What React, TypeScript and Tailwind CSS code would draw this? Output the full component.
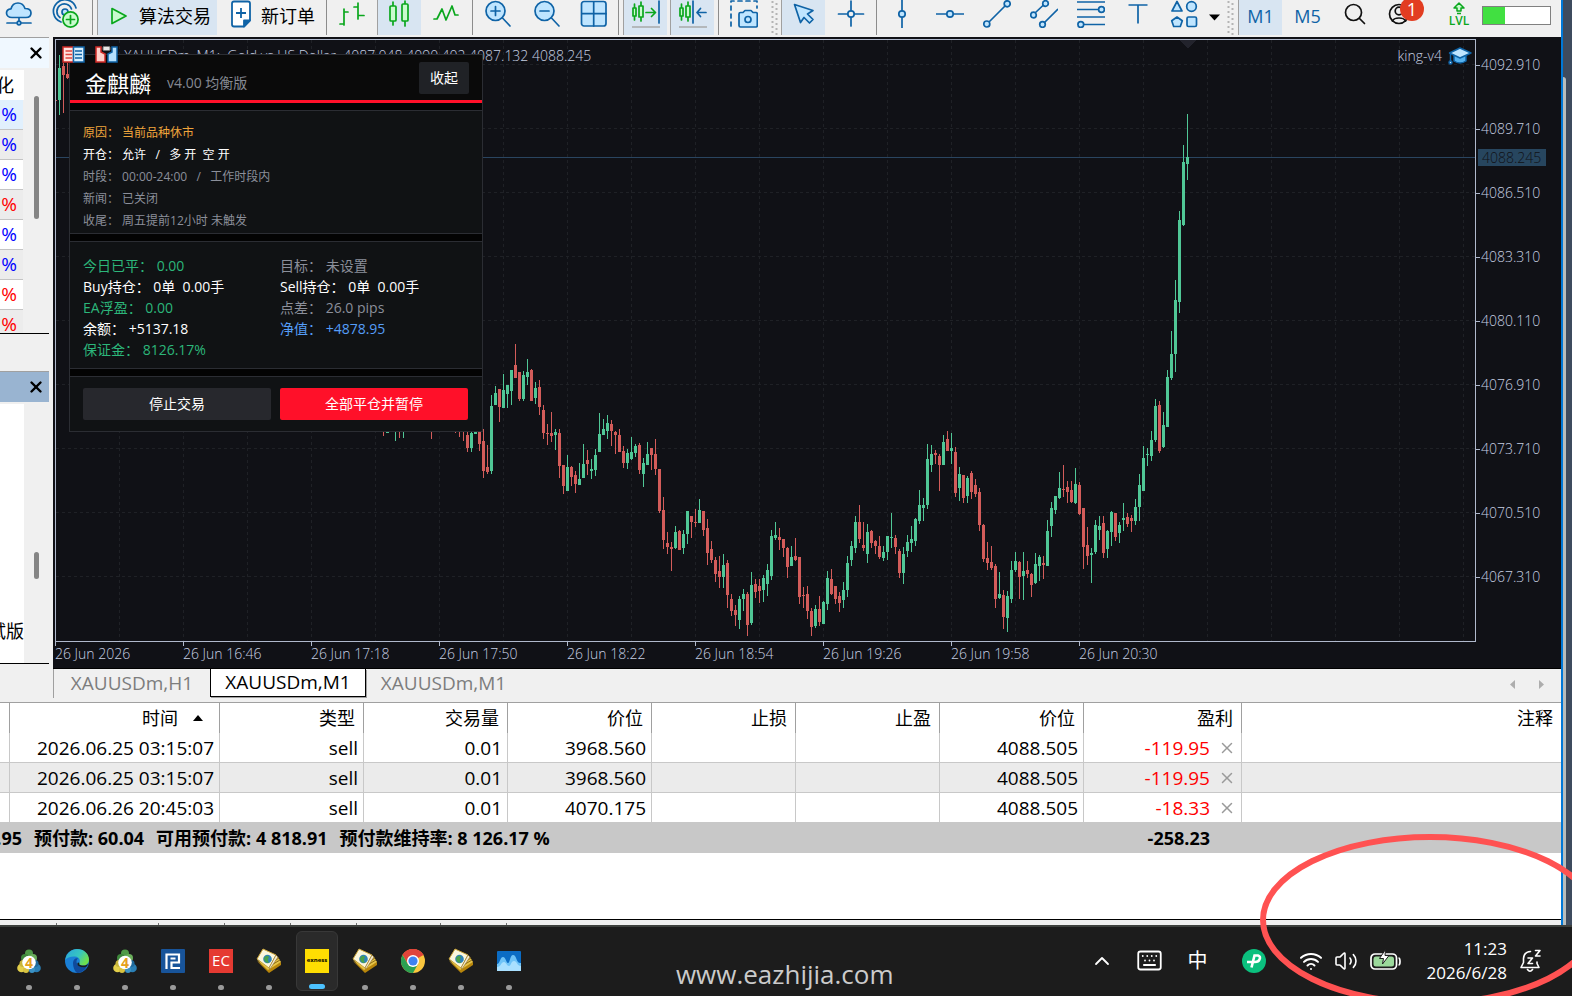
import React from 'react';
import { ChevronUp, Keyboard, Volume2, Wifi, X } from 'lucide-react';

type Direction = 'up' | 'down';

interface Candle {
  x: number;
  dir: Direction;
  high: number;
  top: number;
  bottom: number;
  low: number;
}

const UP = '#50c796';
const DOWN = '#d35c5a';
const BLUE = '#0f63a6';
const BLUE_FILL = '#bfe5ff';
const GREEN = '#0aa71d';
const GREEN_FILL = '#c9fbce';

// direction, high, body top, body bottom, low
const SERIES = `
r 432 435 448 452|g 432 433 448 452|g 432 432 434 434|r 432 432 444 451|r 429 441 471 478
r 445 467 472 474|g 395 406 471 474|g 386 393 405 405|r 389 389 407 422|g 374 390 408 408
g 385 385 394 408|g 370 370 391 405|r 344 365 378 378|r 372 372 399 401|g 371 375 399 401
g 359 372 377 385|r 369 370 401 401|g 382 388 398 404|r 380 387 407 415|r 405 410 433 439
r 424 433 434 445|r 412 433 436 442|g 429 432 435 450|r 429 433 466 478|r 465 465 486 494
g 455 467 491 491|r 466 467 477 486|r 471 475 484 493|g 463 479 485 485|g 444 464 478 478
r 450 460 464 475|g 459 469 471 479|g 449 455 470 476|g 413 434 452 452|g 419 429 435 435
g 415 423 431 439|r 420 424 431 446|r 431 432 435 454|r 429 435 452 452|r 446 451 463 468
g 449 453 463 469|g 437 452 459 460|g 444 446 453 457|r 443 445 470 474|g 458 463 474 487
g 442 454 465 465|r 448 448 455 470|r 439 454 469 475|r 469 469 511 513|r 497 510 540 549
r 532 543 547 554|r 542 547 549 571|g 526 532 548 549|r 530 531 550 550|g 530 534 548 554
g 511 511 534 544|r 516 516 522 538|r 509 522 523 527|g 499 510 523 523|r 511 511 530 536
r 519 528 553 565|r 541 549 560 563|r 557 560 574 582|r 556 571 577 588|g 554 565 577 588
r 560 563 595 608|r 594 599 611 616|r 605 610 615 626|g 596 599 620 629|g 589 594 599 611
r 592 594 625 636|g 572 585 623 625|r 579 584 592 598|r 579 586 591 603|g 575 578 590 602
g 564 570 584 596|g 530 536 576 580|g 522 535 538 540|r 528 537 540 550|r 539 539 548 557
r 547 548 567 578|g 546 557 566 566|r 538 556 560 561|r 557 557 597 604|r 587 595 596 608
r 586 594 611 619|r 608 611 627 636|g 605 609 626 628|r 596 609 622 626|g 601 602 624 624
g 571 578 604 610|r 569 579 594 595|r 586 586 599 604|r 592 596 603 612|g 582 590 600 608
g 556 563 590 597|g 541 546 560 566|g 516 522 548 553|r 505 522 539 543|r 522 545 548 551
g 524 532 554 563|r 530 531 543 548|r 540 541 546 554|r 536 546 557 559|g 546 552 558 561
g 536 536 552 560|g 513 537 538 548|r 535 538 547 554|r 549 551 573 578|g 547 554 573 584
g 535 542 551 557|g 526 539 543 552|g 518 519 541 546|g 490 505 521 524|g 498 505 508 521
g 444 459 505 509|g 445 454 465 472|r 450 453 455 464|r 454 456 465 491|g 435 442 465 465
r 431 439 451 451|g 433 448 451 464|r 447 452 493 497|g 467 474 488 501|r 475 475 498 503
g 476 478 496 503|r 471 473 492 499|r 479 485 494 497|r 488 492 525 531|r 524 525 559 562
r 542 558 563 570|r 546 562 568 570|r 564 566 599 608|g 572 594 598 599|r 590 595 617 629
g 591 596 618 632|g 561 570 599 603|g 552 561 570 572|r 561 562 577 599|g 552 571 576 600
r 561 570 574 578|r 573 574 585 597|g 553 564 583 584|g 555 557 566 581|r 556 563 565 579
g 520 531 566 566|g 502 508 526 537|g 496 496 510 514|g 472 488 498 499|r 465 489 490 497
r 481 487 492 503|r 481 490 502 503|g 468 484 503 504|r 482 485 514 515|r 508 508 547 569
r 527 545 556 565|g 548 553 555 583|g 520 525 552 554|g 516 526 530 540|r 516 523 553 558
g 530 531 549 558|g 511 512 532 546|r 513 513 537 541|g 522 525 533 543|g 503 518 520 531
r 513 517 524 527|r 515 518 521 532|g 499 507 521 525|g 474 485 507 521|g 446 458 491 491
g 448 454 455 466|g 431 440 456 461|g 399 406 440 442|r 401 405 451 453|g 412 425 447 448
g 370 377 427 427|g 331 354 378 380|g 280 300 354 372|g 211 220 302 313|g 145 162 225 226
g 114 157 164 180`;

const parseCandle = (row: string, x: number): Candle => {
  const [dir, high, top, bottom, low] = row.trim().split(' ');
  return { x, dir: dir === 'g' ? 'up' : 'down', high: +high, top: +top, bottom: +bottom, low: +low };
};

const CANDLES: Candle[] = [
  parseCandle('g 55 68 100 115', 59),
  parseCandle('r 63 66 75 113', 63),
  parseCandle('r 63 74 78 79', 67),
  parseCandle('r 425 425 428 436', 383),
  parseCandle('g 425 425 433 433', 387),
  parseCandle('g 425 425 428 441', 395),
  parseCandle('r 425 425 428 438', 399),
  parseCandle('g 425 425 428 438', 403),
  parseCandle('r 425 425 428 439', 431),
  parseCandle('r 425 425 428 433', 455),
  parseCandle('r 425 425 428 437', 459),
  parseCandle('r 425 425 428 441', 463),
  ...SERIES.trim().split(/[|\n]/).map((row, i) => parseCandle(row, 467 + i * 4)),
];

const PRICES = ['4092.910', '4089.710', '4086.510', '4083.310', '4080.110', '4076.910', '4073.710', '4070.510', '4067.310'];
const TIMES = ['2026', '16:46', '17:18', '17:50', '18:22', '18:54', '19:26', '19:58', '20:30'];

const POSITIONS = [
  { time: '2026.06.25 03:15:07', open: '3968.560', profit: '-119.95' },
  { time: '2026.06.25 03:15:07', open: '3968.560', profit: '-119.95' },
  { time: '2026.06.26 20:45:03', open: '4070.175', profit: '-18.33' },
];

const WATCH_ROWS = [
  'bg-[#e1f0fd] text-[#0000ff]',
  'bg-[#ececec] text-[#0000ff]',
  'bg-white text-[#0000ff]',
  'bg-[#ececec] text-[#ff0000]',
  'bg-white text-[#0000ff]',
  'bg-[#ececec] text-[#0000ff]',
  'bg-white text-[#ff0000]',
  'bg-[#ececec] text-[#ff0000]',
];

/* ---------- Toolbar ---------- */

const Icon: React.FC<{ children: React.ReactNode; color?: string; fill?: string }> = ({
  children,
  color = BLUE,
  fill = 'none',
}) => (
  <svg width="28" height="28" viewBox="0 0 28 28" stroke={color} fill={fill} strokeWidth="1.7" strokeLinecap="round" strokeLinejoin="round" className="shrink-0" aria-hidden="true">
    {children}
  </svg>
);

interface ToolProps {
  label: string;
  className: string;
  active?: boolean;
  children: React.ReactNode;
}

const Tool: React.FC<ToolProps> = ({ label, className, active, children }) => (
  <button
    type="button"
    aria-label={label}
    className={`flex h-[35px] shrink-0 items-center justify-center pb-[7px] ${active ? 'border-l border-[#a0a0a0] bg-[#d8e5f2]' : ''} ${className}`}
  >
    {children}
  </button>
);

const Separator = ({ className = '' }: { className?: string }) => (
  <div className={`h-[35px] w-px shrink-0 bg-[#8c8c8c] ${className}`} />
);

const Grip = () => (
  <svg width="7" height="36" className="shrink-0" aria-hidden="true">
    <path d="M1.5 1V36" stroke="#b4b4b4" strokeWidth="2" strokeDasharray="2 3" />
    <path d="M5.5 3V36" stroke="#b4b4b4" strokeWidth="2" strokeDasharray="2 3" />
  </svg>
);

const Toolbar = () => (
  <header className="flex h-[37px] items-start overflow-hidden bg-[#f0f0f0] text-lg text-black">
    <Tool label="云端" className="w-[38px]">
      <Icon fill={BLUE_FILL}>
        <path d="M7 17.500C3.500 17.500 1.500 15.500 1.500 13C1.500 10.500 3.500 9 6 8.800C7 5 9.500 3 13 3C17 3 19 5.500 20 8.500C24 8.500 26 10.500 26 13C26 15.700 24 17.500 21 17.500Z" />
        <path d="M14 18V21M2 23H11.500M16 23H26" />
        <circle cx="14" cy="23" r="1.800" />
      </Icon>
    </Tool>
    <Tool label="信号" className="w-[54px]">
      <Icon>
        <path d="M10 22A11.500 11.500 0 1 1 25 8M9 17.500A7.500 7.500 0 1 1 20.500 9" />
        <circle cx="14" cy="12" r="3" fill={BLUE_FILL} />
        <circle cx="19.500" cy="19.500" r="7.600" stroke={GREEN} fill={GREEN_FILL} />
        <path d="M19.500 15.500V23.500M15.500 19.500H23.500" stroke={GREEN} />
      </Icon>
    </Tool>
    <Separator />
    <button type="button" className="ml-1 flex h-[35px] w-[120px] shrink-0 items-center gap-3 border-l border-[#a0a0a0] bg-[#d8e5f2] pb-1 pl-[13px]">
      <svg width="16" height="18" viewBox="0 0 16 18" fill={GREEN_FILL} stroke={GREEN} strokeWidth="1.700" strokeLinejoin="round" aria-hidden="true">
        <path d="M1 1.500L15 9L1 16.500Z" />
      </svg>
      算法交易
    </button>
    <button type="button" className="flex h-[35px] w-[109px] shrink-0 items-center gap-2.5 pb-1 pl-3.5">
      <svg width="20" height="28" viewBox="0 0 20 28" fill="#fff" stroke={BLUE} strokeWidth="1.800" strokeLinejoin="round" className="-mt-1" aria-hidden="true">
        <path d="M3 1.500H17Q19 1.500 19 3.500V20L13 26.500H3Q1 26.500 1 24.500V3.500Q1 1.500 3 1.500Z" />
        <path d="M13 26.500V20.500H19Z" fill={BLUE} />
        <path d="M10 8V18M5 13H15" />
      </svg>
      新订单
    </button>
    <Separator />
    <Tool label="柱状图" className="w-[50px]">
      <Icon color={GREEN}><path d="M6 9V25M2 24H6M6 12H10M20 3V19M16 7H20M20 15.500H26" /></Icon>
    </Tool>
    <Tool label="蜡烛图" className="w-11" active>
      <Icon color={GREEN} fill={GREEN_FILL}>
        <path d="M7 2V25M19 1V26" />
        <rect x="4" y="6" width="6" height="15" rx="1" />
        <rect x="16" y="4" width="6" height="17" rx="1" />
      </Icon>
    </Tool>
    <Tool label="折线图" className="w-[51px]">
      <Icon color={GREEN}><path d="M1 19H4L9 9L13 20L19 6L22 15H25" /></Icon>
    </Tool>
    <Separator />
    <Tool label="放大" className="w-[50px]">
      <Icon><circle cx="11.500" cy="11" r="9.500" fill={BLUE_FILL} /><path d="M18.500 18L26 26M7 11H16M11.500 6.500V15.500" /></Icon>
    </Tool>
    <Tool label="缩小" className="w-12">
      <Icon><circle cx="11.500" cy="11" r="9.500" fill={BLUE_FILL} /><path d="M18.500 18L26 26M7 11H16" /></Icon>
    </Tool>
    <Tool label="平铺窗口" className="w-[46px]">
      <Icon><rect x="1.500" y="1.500" width="24.500" height="24.500" rx="2.500" fill={BLUE_FILL} /><path d="M13.700 2V26M2 13.700H26" /></Icon>
    </Tool>
    <Separator className="ml-px" />
    <Tool label="自动滚动" className="ml-1 w-11" active>
      <Icon color={GREEN}>
        <path d="M2.500 4V20M9 2V21" /><path d="M1 8H4V16H1ZM7 6H11V17H7Z" fill={GREEN_FILL} />
        <path d="M14 12.500H23M19.500 8.500L23.500 12.500L19.500 16.500" /><path d="M27 1V23" stroke={BLUE} />
        <path d="M0 27H28" stroke="#a8a8a8" />
      </Icon>
    </Tool>
    <Tool label="图表平移" className="ml-[3px] w-11" active>
      <Icon color={GREEN}>
        <path d="M2.500 4V20M9 2V21" /><path d="M1 8H4V16H1ZM7 6H11V17H7Z" fill={GREEN_FILL} />
        <path d="M14 1V23M18 12.500H27M21.500 8.500L18 12.500L21.500 16.500" stroke={BLUE} />
        <path d="M0 27H28" stroke="#a8a8a8" />
      </Icon>
    </Tool>
    <Separator className="ml-1" />
    <Tool label="截图" className="w-[50px]">
      <Icon>
        <path d="M1 26V1H27V8" strokeDasharray="4 4" />
        <path d="M9 14Q9 12.500 10.500 12.500H13L15 10.500H21L23 12.500H26Q27.300 12.500 27.300 14V25.500Q27.300 27 26 27H10.500Q9 27 9 25.500Z" fill={BLUE_FILL} />
        <circle cx="18" cy="19.500" r="3" />
      </Icon>
    </Tool>
    <div className="ml-0.5 mr-[3px]"><Grip /></div>
    <Tool label="光标" className="w-11" active>
      <Icon><path d="M4.500 4.500L23 10.500L17.500 14L23 19.500L19.500 23L14 17.500L10.500 22.500Z" fill={BLUE_FILL} /></Icon>
    </Tool>
    <Tool label="十字线" className="w-[51px]">
      <Icon><path d="M14 1V10.500M14 17.500V26M1.500 14H10.500M17.500 14H26.500" /><circle cx="14" cy="14" r="3.200" /></Icon>
    </Tool>
    <Separator />
    <Tool label="垂直线" className="w-[50px]">
      <Icon><path d="M14 0V10.500M14 17.500V28" /><circle cx="14" cy="14" r="3.200" fill={BLUE_FILL} /></Icon>
    </Tool>
    <Tool label="水平线" className="w-[45px]">
      <Icon><path d="M0.500 14H10.500M17.500 14H27.500" /><circle cx="14" cy="14" r="3.200" fill={BLUE_FILL} /></Icon>
    </Tool>
    <Tool label="趋势线" className="w-[49px]">
      <Icon><path d="M6 22L22 6" /><circle cx="3.800" cy="24" r="3" fill={BLUE_FILL} /><circle cx="24.200" cy="3.800" r="3" fill={BLUE_FILL} /></Icon>
    </Tool>
    <Tool label="等距通道" className="w-[46px]">
      <Icon>
        <path d="M5 13L14 4.500M14.500 22.500L27.500 9.500" />
        <circle cx="3.500" cy="15" r="2.800" fill={BLUE_FILL} /><circle cx="15.500" cy="3.500" r="2.800" fill={BLUE_FILL} /><circle cx="12.500" cy="24.500" r="2.800" fill={BLUE_FILL} />
      </Icon>
    </Tool>
    <Tool label="斐波那契" className="w-12">
      <Icon>
        <path d="M0.500 2H27.500M0.500 9.500H21.500M0.500 17H27.500M7 24.500H27.500" />
        <circle cx="24.500" cy="9.500" r="2.900" fill={BLUE_FILL} /><circle cx="3.800" cy="24.500" r="2.900" fill={BLUE_FILL} />
      </Icon>
    </Tool>
    <Tool label="文本" className="w-[46px]">
      <Icon><path d="M4.500 5H23.500M14 5V23.500" strokeLinecap="butt" /></Icon>
    </Tool>
    <Tool label="图形" className="w-[46px]">
      <Icon fill={BLUE_FILL}>
        <path d="M7 1.500L12 11H2Z" /><circle cx="21.500" cy="6.500" r="4.800" />
        <path d="M7 17L12.300 20.800L10.300 26.500H3.700L1.700 20.800Z" /><rect x="17" y="17" width="9.500" height="9.500" rx="1.500" />
      </Icon>
    </Tool>
    <button type="button" aria-label="更多图形" className="flex h-[35px] w-3.5 shrink-0 items-center justify-center">
      <svg width="11" height="7" aria-hidden="true"><path d="M0 0.500H11L5.500 6.500Z" /></svg>
    </button>
    <div className="ml-1.5 mr-1"><Grip /></div>
    <button type="button" className="h-[35px] w-11 shrink-0 border-l border-[#a0a0a0] bg-[#d8e5f2] pb-1 text-[#0f63a6]">M1</button>
    <button type="button" className="h-[35px] w-[51px] shrink-0 pb-1 text-[#0f63a6]">M5</button>
    <div className="ml-auto flex shrink-0 items-start pr-2.5">
      <Tool label="搜索" className="w-[38px]">
        <Icon color="#111"><circle cx="12.500" cy="12.500" r="8" /><path d="M18.500 18.500L23.500 23.500" /></Icon>
      </Tool>
      <div className="relative">
        <Tool label="账户" className="w-[54px]">
          <Icon color="#111">
            <circle cx="12" cy="14" r="9.500" /><circle cx="12" cy="11" r="3.800" /><path d="M5.500 21C7 17 17 17 18.500 21" />
          </Icon>
        </Tool>
        <span className="absolute -top-[3px] left-[26px] flex size-6 items-center justify-center rounded-full bg-[#e23d21] text-lg leading-6 text-white">1</span>
      </div>
      <button type="button" className="ml-2 flex h-[35px] w-[46px] flex-col items-center pt-0.5 text-xs leading-3 font-semibold text-[#0aa71d]">
        <svg width="12" height="13" viewBox="0 0 12 13" fill={GREEN_FILL} stroke={GREEN} strokeWidth="1.500" strokeLinejoin="round" aria-hidden="true">
          <path d="M6 1L11 6H8V9H4V6H1ZM4 11.500H8" />
        </svg>
        LVL
      </button>
      <div className="mt-1.5 h-[19px] w-[69px] border border-[#808080] bg-white">
        <div className="h-full w-1/3 bg-[#41e041]" />
      </div>
    </div>
  </header>
);

/* ---------- Left docks ---------- */

const DockHeader = ({ className }: { className: string }) => (
  <div className={`flex h-[31px] items-center justify-end border-t border-[#a0a0a0] pr-1 ${className}`}>
    <button type="button" aria-label="关闭"><X className="size-[18px]" strokeWidth={3.2} /></button>
  </div>
);

const LeftDocks = () => (
  <aside className="mr-1 flex w-[49px] shrink-0 flex-col text-lg text-black">
    <DockHeader className="bg-[#f0f8ff]" />
    <div className="flex h-[266px] overflow-hidden border-b border-black">
      <ul className="w-6 shrink-0 pt-0.5">
        <li className="flex h-[30px] items-center justify-end bg-white pr-2.5">化</li>
        {WATCH_ROWS.map((row, i) => (
          <li key={i} className={`mr-px flex h-[30px] items-center justify-end border-b border-[#c4c4c4] pr-1.5 text-[19px] ${row}`}>%</li>
        ))}
      </ul>
      <div className="mt-7 ml-2.5 h-[123px] w-[5px] rounded-full bg-[#858585]" />
    </div>
    <div className="h-[37px]" />
    <DockHeader className="bg-[#99b4d1]" />
    <div className="flex h-[262px] overflow-hidden border-b border-black pt-0.5">
      <div className="flex w-6 shrink-0 items-end justify-end overflow-hidden bg-white pb-[18px] whitespace-nowrap">试版</div>
      <div className="mt-37 ml-2.5 h-[27px] w-[5px] rounded-full bg-[#858585]" />
    </div>
  </aside>
);

/* ---------- Chart ---------- */

const Plot = () => (
  <svg className="block h-full w-full" role="img" aria-label="XAUUSDm M1">
    <g transform="translate(-56 -40)" shapeRendering="crispEdges">
      {Array.from({ length: 22 }, (_, i) => (
        <path key={`v${i}`} d={`M${119.5 + i * 64} 40V641`} stroke="#1f2126" strokeDasharray="3 3" />
      ))}
      {PRICES.map((price, i) => (
        <path key={price} d={`M56 ${64.5 + i * 64}H1475`} stroke="#1f2126" strokeDasharray="3 3" />
      ))}
      <path d="M56 157.500H3000" stroke="#2a4560" />
      <path d="M1179 40H1196L1187.500 48.500Z" fill="#22232c" />
      <rect x="56" y="100" width="1" height="1" fill={DOWN} />
      {CANDLES.map((c) => (
        <g key={c.x} fill={c.dir === 'up' ? UP : DOWN}>
          <rect x={c.x} y={c.high} width="1" height={c.low - c.high} />
          <rect x={c.x - 1} y={c.top} width="3" height={c.bottom - c.top} />
        </g>
      ))}
    </g>
  </svg>
);

const EaPanel = () => (
  <section className="absolute top-[17px] left-4 w-[414px] border border-[#2b2d33] bg-[#101214] text-sm text-white">
    <div className="flex h-[45px] items-center bg-[#0a0a0a] pr-[13px] pl-[15px]">
      <div className="flex items-center gap-4 pt-2.5">
        <h2 className="text-[22px] leading-8">金麒麟</h2>
        <span className="text-[#858993]">v4.00 均衡版</span>
      </div>
      <button type="button" className="ml-auto h-8 w-[50px] rounded-xs bg-[#202226]">收起</button>
    </div>
    <div className="h-[3px] bg-[#ff1029]" />
    <div className="h-2 border-b border-[#2b2d33] bg-[#030303]" />
    <div className="flex flex-col px-[13px] pt-[11px] text-xs leading-[22px] whitespace-pre text-[#8b8f9a]">
      <p className="text-[#efa53c]">原因： 当前品种休市</p>
      <p className="text-white">开仓： 允许   /   多 开  空 开</p>
      <p>时段： 00:00-24:00   /   工作时段内</p>
      <p>新闻： 已关闭</p>
      <p>收尾： 周五提前12小时 未触发</p>
    </div>
    <div className="mt-px h-[9px] border-y border-[#2b2d33] bg-[#030303]" />
    <div className="grid grid-cols-2 gap-x-[9px] pt-[13px] pr-3.5 pb-2 pl-[13px] leading-[21px] whitespace-pre">
      <div>
        <p className="text-[#2cb67a]">今日已平： 0.00</p>
        <p>Buy持仓： 0单  0.00手</p>
        <p className="text-[#2cb67a]">EA浮盈： 0.00</p>
        <p>余额： +5137.18</p>
        <p className="text-[#2cb67a]">保证金： 8126.17%</p>
      </div>
      <div className="text-[#8b8f9a]">
        <p>目标： 未设置</p>
        <p className="text-white">Sell持仓： 0单  0.00手</p>
        <p>点差： 26.0 pips</p>
        <p className="text-[#559df8]">净值： +4878.95</p>
      </div>
    </div>
    <div className="h-[9px] border-y border-[#2b2d33] bg-[#030303]" />
    <div className="grid grid-cols-2 gap-[9px] py-[11px] pr-3.5 pl-[13px]">
      <button type="button" className="h-8 rounded-xs bg-[#27282d]">停止交易</button>
      <button type="button" className="h-8 rounded-xs bg-[#ff1029]">全部平仓并暂停</button>
    </div>
  </section>
);

const ChartTitle = () => (
  <div className="absolute inset-x-0 top-1.5 flex h-5 items-center pr-[3px] pl-[7px]">
    <div className="ml-[61px] leading-5 whitespace-pre">XAUUSDm, M1:  Gold vs US Dollar  4087.048 4090.402 4087.132 4088.245</div>
    <div className="ml-auto flex items-center gap-1.5">
      king-v4
      <svg width="24" height="18" viewBox="0 0 24 18" fill={BLUE_FILL} stroke={BLUE} strokeWidth="1.500" strokeLinejoin="round" aria-hidden="true">
        <path d="M6 8V14Q12 18 18 14V8Z" fill="#56b2ef" />
        <path d="M12 1L23 6L12 11L1.500 6Z" />
        <path d="M2.500 7V14" />
        <circle cx="2.500" cy="15.500" r="1.500" />
      </svg>
    </div>
  </div>
);

const TradeToggles = () => (
  <div className="absolute top-[9px] left-[9px] flex gap-2.5">
    <svg width="23" height="17" viewBox="0 0 23 17" aria-hidden="true">
      <path d="M1 1H11.500V16H1Z" fill="#ffe3df" stroke="#cf2a27" strokeWidth="1.500" />
      <path d="M11.500 1H22V16H11.500Z" fill="#d7efff" stroke={BLUE} strokeWidth="1.500" />
      <path d="M3.500 5H10M3.500 8.500H10M3.500 12H10" stroke="#e0443f" strokeWidth="1.500" />
      <path d="M13 5H20M13 8.500H20M13 12H20" stroke={BLUE} strokeWidth="1.500" />
    </svg>
    <svg width="23" height="17" viewBox="0 0 23 17" aria-hidden="true">
      <path d="M1 1H6V6L10 8V16H1Z" fill="#ffd0ca" stroke="#cf2a27" strokeWidth="1.500" />
      <path d="M22 1H17V6L13 8V16H22Z" fill="#b5e1ff" stroke={BLUE} strokeWidth="1.500" />
      <rect x="8" y="0.500" width="7" height="4" rx="1" fill="#e6e6e6" stroke="#777" />
    </svg>
  </div>
);

const Chart = () => (
  <section className="relative h-[631px] bg-[#101116] pt-0.5 pl-0.5 text-sm text-[#c6cfe2]">
    <div className="flex h-[603px]">
      <div className="relative min-w-0 flex-1 overflow-hidden border border-[#b0b9cc] font-light">
        <Plot />
        <ChartTitle />
      </div>
      <div className="relative flex w-[85px] shrink-0 flex-col gap-11 pt-4 font-light">
        {PRICES.map((price) => (
          <div key={price} className="flex h-5 items-center gap-px">
            <span className="h-px w-1 bg-[#b0b9cc]" />
            {price}
          </div>
        ))}
        <div className="absolute top-[110px] left-0.5 h-[17px] w-[68px] bg-[#27465f] pl-1 leading-[17px] text-[#101116]">4088.245</div>
      </div>
    </div>
    <div className="flex font-light">
      {TIMES.map((time) => (
        <div key={time} className="w-32 shrink-0">
          <div className="h-1 w-px bg-[#b0b9cc]" />
          <div className="leading-4">26 Jun {time}</div>
        </div>
      ))}
    </div>
    <EaPanel />
    <TradeToggles />
  </section>
);

const ChartTabs = () => (
  <nav className="flex h-[34px] items-start border-t border-black text-[19px] leading-[27px] text-[#7d7d7d]">
    <button type="button" className="h-[29px] w-[157px] border-l border-[#a0a0a0]">XAUUSDm,H1</button>
    <button type="button" className="h-7 w-[156px] border-x border-b border-black bg-white text-black shadow-[1px_1px_0_#a0a0a0]">XAUUSDm,M1</button>
    <button type="button" className="h-[29px] w-[155px]">XAUUSDm,M1</button>
    <div className="ml-auto flex h-[30px] items-center gap-6 pr-[17px]">
      <button type="button" aria-label="上一个"><svg width="5" height="9" className="block" fill="#adadad"><path d="M5 0V9L0 4.500Z" /></svg></button>
      <button type="button" aria-label="下一个"><svg width="5" height="9" className="block" fill="#adadad"><path d="M0 0V9L5 4.500Z" /></svg></button>
    </div>
  </nav>
);

/* ---------- Terminal ---------- */

const HEAD = 'border-r border-[#a0a0a0] pr-2 text-right font-normal';
const CELL = 'border-r border-b border-[#c8c8c8] pr-[5px] text-right';

const Positions = () => (
  <div className="flex-1 border-t border-[#a0a0a0] bg-white">
    <table className="w-full table-fixed border-separate border-spacing-0 text-lg leading-7 whitespace-nowrap text-black">
      <colgroup>
        <col className="w-2.5" />
        <col className="w-[210px]" />
        <col className="w-36" /><col className="w-36" /><col className="w-36" />
        <col className="w-36" /><col className="w-36" /><col className="w-36" />
        <col className="w-[158px]" />
        <col />
      </colgroup>
      <thead>
        <tr className="h-[30px]">
          <th className={HEAD} />
          <th className={HEAD}>
            <span className="flex items-center justify-end gap-[15px] pr-2">
              时间
              <svg width="10" height="6" aria-hidden="true"><path d="M0 6L5 0L10 6Z" /></svg>
            </span>
          </th>
          {['类型', '交易量', '价位', '止损', '止盈', '价位', '盈利'].map((name, i) => (
            <th key={i} className={HEAD}>{name}</th>
          ))}
          <th className="pr-2 text-right font-normal">注释</th>
        </tr>
      </thead>
      <tbody className="text-[19px]">
        {POSITIONS.map((p, i) => (
          <tr key={i} className={i === 1 ? 'h-[30px] bg-[#ebebeb]' : 'h-[30px]'}>
            <td className={CELL} />
            <td className={CELL}>{p.time}</td>
            <td className={CELL}>sell</td>
            <td className={CELL}>0.01</td>
            <td className={CELL}>{p.open}</td>
            <td className={CELL} />
            <td className={CELL} />
            <td className={CELL}>4088.505</td>
            <td className={CELL}>
              <span className="flex items-center justify-end gap-2 text-[#ff0000]">
                {p.profit}
                <button type="button" aria-label="平仓" className="text-[#9a9a9a]"><X className="size-[18px]" /></button>
              </span>
            </td>
            <td className="border-b border-[#c8c8c8]" />
          </tr>
        ))}
      </tbody>
      <tfoot>
        <tr className="h-[30px] bg-[#c8c8c8] font-bold">
          <td colSpan={8}>
            <div className="flex gap-3">
              <span className="flex w-[22px] justify-end overflow-hidden">.95</span>
              <span>预付款: 60.04</span>
              <span>可用预付款: 4 818.91</span>
              <span>预付款维持率: 8 126.17 %</span>
            </div>
          </td>
          <td className="pr-8 text-right">-258.23</td>
          <td />
        </tr>
      </tfoot>
    </table>
  </div>
);

const StatusBar = () => (
  <div className="flex h-1.5 items-end border-t border-black bg-[#f0f0f0]">
    <div className="h-0.5 w-[57px] border-r border-[#707070]" />
    <div className="h-0.5 w-[102px] border-r border-[#707070]" />
    <div className="h-0.5 w-[66px] border-r border-[#707070]" />
    <div className="h-0.5 w-[66px] border-r border-[#707070]" />
    <div className="h-0.5 w-[66px] border-r border-[#707070]" />
    <div className="h-0.5 w-[84px] border-r border-[#707070]" />
    <div className="h-0.5 w-[66px] border-r border-[#707070]" />
  </div>
);

/* ---------- Taskbar ---------- */

const Mt4Logo = () => (
  <svg width="24" height="24" viewBox="0 0 24 24" aria-hidden="true">
    <circle cx="12" cy="4.500" r="4" fill="#4f9a48" />
    <circle cx="8" cy="9" r="4" fill="#3d873b" />
    <circle cx="16" cy="9" r="4" fill="#6aae5b" />
    <circle cx="4.500" cy="19" r="4.300" fill="#e3cf4a" />
    <circle cx="6" cy="14.500" r="3.500" fill="#c8b53a" />
    <circle cx="9" cy="21" r="3" fill="#d8c341" />
    <circle cx="19.500" cy="19" r="4.300" fill="#2a7fb5" />
    <circle cx="18" cy="14.500" r="3.500" fill="#1e6a9d" />
    <circle cx="15" cy="21" r="3" fill="#3b92c5" />
    <circle cx="12" cy="13.500" r="6.800" fill="#fff" />
    <text x="12" y="18.500" fontSize="14" fontWeight="700" textAnchor="middle" fill="#e5a11c" fontFamily="Open Sans, sans-serif">4</text>
  </svg>
);

const EdgeLogo = () => (
  <svg width="24" height="24" viewBox="0 0 24 24" aria-hidden="true">
    <defs>
      <linearGradient id="edge-top" x1="0" y1="0" x2="1" y2="0.500">
        <stop offset="0" stopColor="#2aa5dc" />
        <stop offset="0.600" stopColor="#37c6c0" />
        <stop offset="1" stopColor="#6ee04d" />
      </linearGradient>
    </defs>
    <circle cx="12" cy="12" r="12" fill="#1a7fd6" />
    <path d="M0.300 11C1.500 3.500 7 0 12 0C19 0 24 5 24 10.500C24 14.500 21 16.500 18 16.500C15 16.500 13.500 15.500 14.500 14C15.500 12 15 8 10 7.500C5.500 7.200 2 8.500 0.300 11Z" fill="url(#edge-top)" />
    <path d="M8 14C8 10.500 11 8.500 13 9.500C10.500 11 11 16.500 16 18C19 18.800 21.500 17.500 22.300 17C20 21.500 16 24 12 24C9.500 22 8 18 8 14Z" fill="#0f4a9c" />
    <path d="M14.500 14C13.500 15.500 15 16.500 18 16.500C20.500 16.500 22.500 15.600 23.200 14.200L22.300 17C20 19 15 18.600 13 16.500C12 15.500 12 12 14.500 14Z" fill="#1c1c1c" />
  </svg>
);

const PLogo = () => (
  <svg width="24" height="24" viewBox="0 0 24 24" fill="none" stroke="#fff" strokeWidth="2.200" aria-hidden="true">
    <rect width="24" height="24" rx="1" fill="#18549a" stroke="none" />
    <path d="M5.500 20V5.500H18V13.500H10.500V19H19M9.500 9.500H14.500" />
  </svg>
);

const BookLogo = () => (
  <svg width="26" height="26" viewBox="0 0 26 26" aria-hidden="true">
    <path d="M1 13L13 25L25 17V14L12 20Z" fill="#b8860b" />
    <path d="M1 12L12 22L25 14L22 9L12 17Z" fill="#e8c547" />
    <path d="M12 19L24 12M12 17L23 10" stroke="#8a6a1a" />
    <path d="M1 11L7 1L20 7L13 20Z" fill="#fbf6dc" stroke="#caa53a" />
    <path d="M13 20L20 7L22 9L14 21Z" fill="#f3ead0" stroke="#8a6a1a" strokeWidth="0.600" />
    <circle cx="11.500" cy="11" r="4.300" fill="#2f83b8" />
    <path d="M8 10Q11 6 13 9Q11 12 13 15Q8 15 8 10Z" fill="#4aa04a" />
  </svg>
);

const ChromeLogo = () => (
  <svg width="24" height="24" viewBox="0 0 24 24" aria-hidden="true">
    <circle cx="12" cy="12" r="12" fill="#fbc63e" />
    <path d="M12 12L1.600 6A12 12 0 0 1 22.400 6Z" fill="#e0443a" />
    <path d="M12 6H22.400A12 12 0 0 0 1.600 6L7 15Z" fill="#e0443a" />
    <path d="M1.600 6A12 12 0 0 0 12 24L17 15L12 18L6.800 15Z" fill="#2ba052" />
    <circle cx="12" cy="12" r="6" fill="#fff" />
    <circle cx="12" cy="12" r="4.600" fill="#3f82f0" />
  </svg>
);

const MonitorLogo = () => (
  <svg width="24" height="20" viewBox="0 0 24 20" aria-hidden="true">
    <rect width="24" height="20" rx="1" fill="#0b6cc4" />
    <path d="M0 13C3 13 3 6 6 6C9 6 9 12 11 12C13 12 13 4 16 4C20 4 19 13 24 12V20H0Z" fill="#6ec3f7" />
    <path d="M0 16C4 16 4 11 7 11C9 11 10 15 12 15C14 15 14 10 17 10C20 10 20 15 24 15V20H0Z" fill="#a9e0ff" />
  </svg>
);

const APPS: { name: string; icon: React.ReactNode; active?: boolean }[] = [
  { name: 'MetaTrader 4', icon: <Mt4Logo /> },
  { name: 'Edge', icon: <EdgeLogo /> },
  { name: 'MetaTrader 4 (2)', icon: <Mt4Logo /> },
  { name: 'P', icon: <PLogo /> },
  { name: 'EC', icon: <span className="flex size-6 items-center justify-center bg-[#e53a32] text-[15px] text-white">EC</span> },
  { name: 'MetaTrader 5', icon: <BookLogo /> },
  { name: 'Exness', icon: <span className="flex size-6 items-center justify-center bg-[#ffde02] text-[6px] font-bold text-black">exness</span>, active: true },
  { name: 'MetaTrader 5 (2)', icon: <BookLogo /> },
  { name: 'Chrome', icon: <ChromeLogo /> },
  { name: 'MetaTrader 5 (3)', icon: <BookLogo /> },
  { name: 'Monitor', icon: <MonitorLogo /> },
];

const Taskbar = () => (
  <footer className="relative flex h-[71px] items-center border-t-2 border-[#3d403d] bg-[#1c1c1c] pb-0.5 pl-[5px] text-white">
    {APPS.map((app) => (
      <button
        key={app.name}
        type="button"
        aria-label={app.name}
        className={`relative mx-[3px] flex h-[60px] w-[42px] items-center justify-center rounded-md ${app.active ? 'border border-[#383838] bg-[#2a2a2a]' : ''}`}
      >
        {app.icon}
        <span className={`absolute bottom-px h-[5px] rounded-full ${app.active ? 'w-4 bg-[#4cc2ff]' : 'w-1.5 bg-[#9a9a9a]'}`} />
      </button>
    ))}
    <a href="#" className="absolute top-[27px] left-[43%] text-[26px] leading-10 text-[#cbcbcb]">www.eazhijia.com</a>
    <div className="ml-auto flex items-center pr-[30px]">
      <button type="button" aria-label="显示隐藏的图标"><ChevronUp className="size-6" strokeWidth={1.8} /></button>
      <button type="button" aria-label="触摸键盘" className="ml-[22px]"><Keyboard className="size-[27px]" strokeWidth={1.6} /></button>
      <button type="button" className="ml-6 text-xl">中</button>
      <button type="button" aria-label="P" className="ml-[35px]">
        <svg width="24" height="24" viewBox="0 0 24 24" aria-hidden="true">
          <circle cx="12" cy="12" r="12" fill="#0bc07e" />
          <path d="M9.500 18.500L12.500 6.500H16Q19 7.500 17.500 10.500Q16.500 13 13 13H5" fill="none" stroke="#fff" strokeWidth="2.600" />
        </svg>
      </button>
      <button type="button" aria-label="网络" className="ml-[33px]"><Wifi className="size-6" strokeWidth={2} /></button>
      <button type="button" aria-label="音量" className="ml-[11px]"><Volume2 className="size-6" strokeWidth={1.6} /></button>
      <button type="button" aria-label="电池" className="ml-3">
        <svg width="31" height="24" viewBox="0 0 31 24" fill="none" stroke="#fff" strokeWidth="1.700" aria-hidden="true">
          <rect x="1" y="5" width="25.500" height="15" rx="4" />
          <path d="M28.500 9Q30 9 30 12.500Q30 16 28.500 16" />
          <path d="M3.500 10.500Q3.500 7.500 6 7.500H21.500Q24 7.500 24 10V15Q24 17.500 21.500 17.500H6Q3.500 17.500 3.500 15Z" fill="#9bd99b" stroke="none" />
          <path d="M15.500 0.500L9.500 9.500H13.500L12.500 15L19 6.500H15Z" fill="#fff" stroke="#1c1c1c" strokeWidth="1" />
        </svg>
      </button>
      <div className="ml-[25px] text-right text-[17px] leading-6">
        <div>11:23</div>
        <div>2026/6/28</div>
      </div>
      <button type="button" aria-label="通知" className="ml-3">
        <svg width="23" height="24" viewBox="0 0 23 24" fill="none" stroke="#fff" strokeWidth="1.600" strokeLinecap="round" strokeLinejoin="round" aria-hidden="true">
          <path d="M11.500 2.500Q5 3 4.500 9.500V13.500L2 18.500H20L18 14.500V13M8.500 20.500Q11 24 13.500 20.500" />
          <path d="M9 9H13.500L9 14.500H13.500M16.500 1.500H21L16.500 7H21" />
        </svg>
      </button>
    </div>
  </footer>
);

export default function App() {
  return (
    <div className="relative flex min-h-screen flex-col overflow-hidden bg-[#f0f0f0] font-['Open_Sans','Noto_Sans_CJK_SC',sans-serif]">
      <div className="flex flex-1">
        <main className="flex min-w-0 flex-1 flex-col">
          <Toolbar />
          <div className="flex">
            <LeftDocks />
            <div className="min-w-0 flex-1">
              <Chart />
              <ChartTabs />
            </div>
          </div>
          <Positions />
          <StatusBar />
        </main>
        <div className="flex w-[11px] shrink-0 border-l-2 border-[#0078d7] bg-[#3e4b5e]">
          <div className="mt-[77px] w-[3px] rounded-tr-sm bg-[#b7bdbd]" />
        </div>
      </div>
      <Taskbar />
      <svg width="312" height="162" className="pointer-events-none absolute right-0 bottom-0" aria-hidden="true">
        <ellipse cx="170" cy="86" rx="167" ry="83" fill="none" stroke="#ff5252" strokeWidth="6" />
      </svg>
    </div>
  );
}
